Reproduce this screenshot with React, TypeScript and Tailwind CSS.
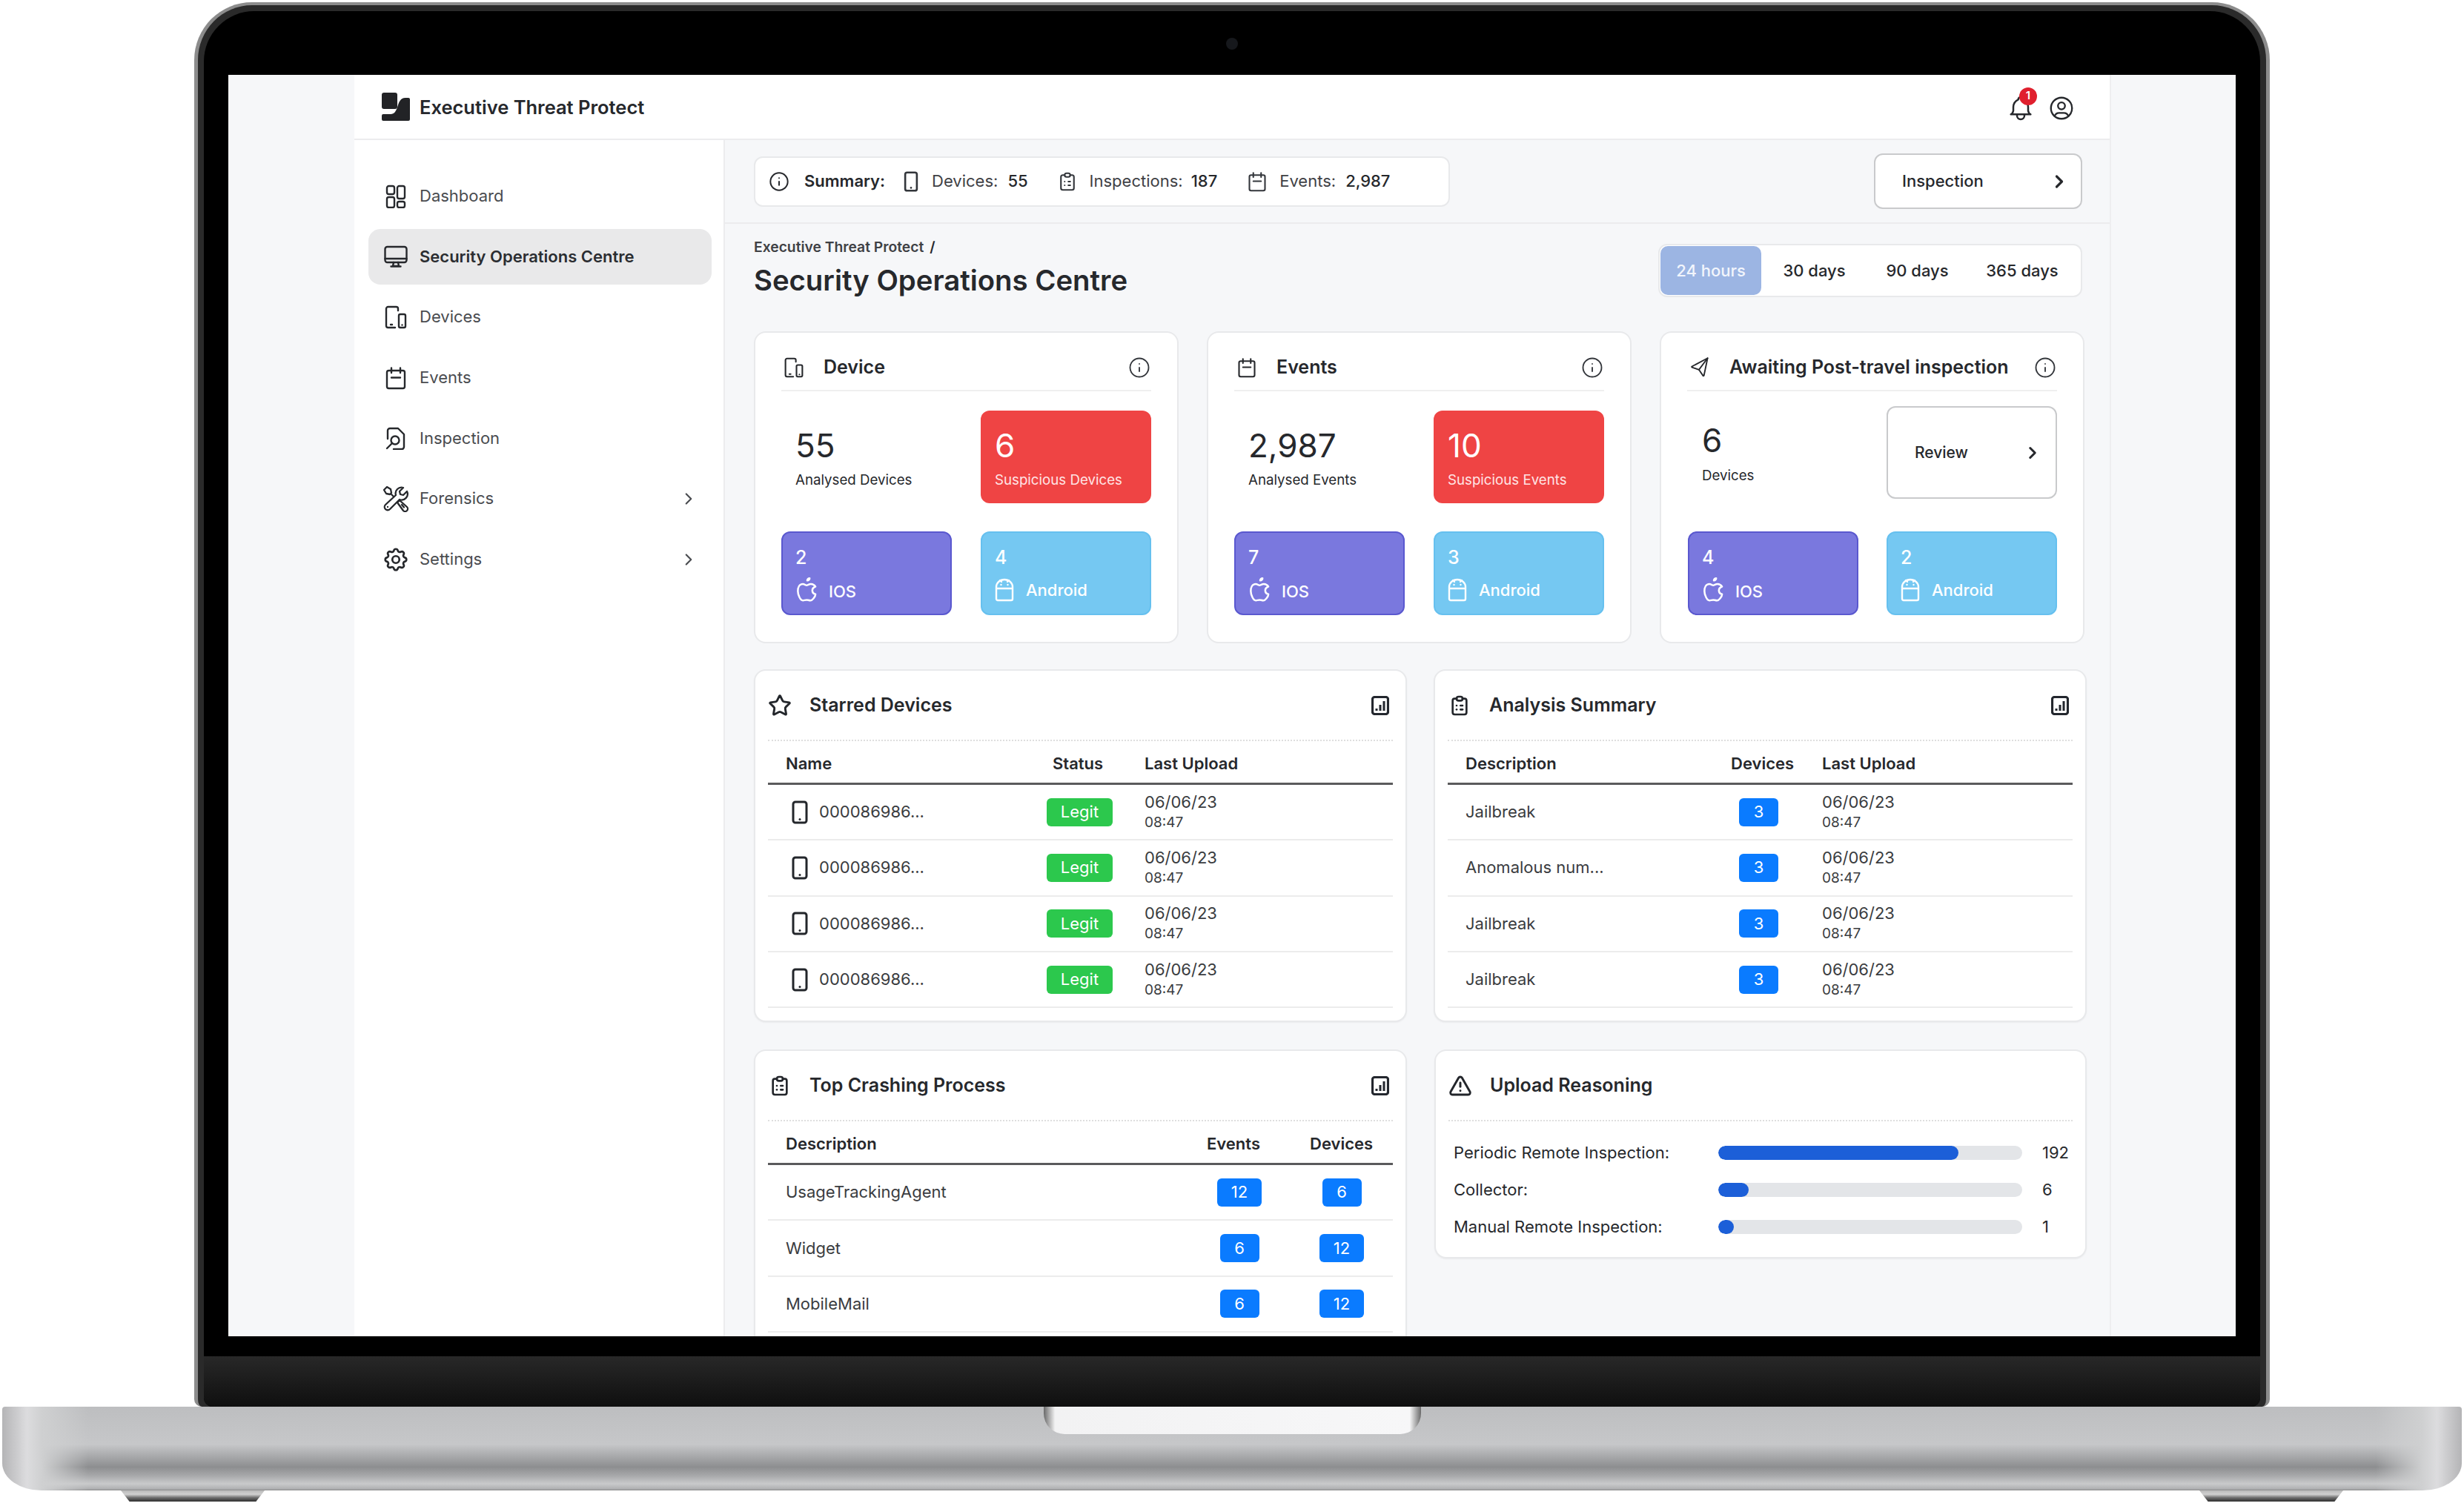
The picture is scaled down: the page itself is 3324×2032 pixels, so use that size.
import type { ReactNode } from 'react';
import { ChevronRight, Info, Star, TriangleAlert } from 'lucide-react';
import {
  TbBell,
  TbBrandApple,
  TbClipboardList,
  TbSend,
  TbSettings,
  TbUserCircle,
} from 'react-icons/tb';

/**
 * Inline icons
 */
const LogoMark = () => (
  <svg viewBox="0 0 38 38" className="h-[38px] w-[38px] fill-[#222326]">
    <rect width="21" height="22" rx="3" />
    <path d="M2 29H12C17 29 19 25 21 20C23 13 25 7 32 7H36a2 2 0 0 1 2 2V36a2 2 0 0 1-2 2H2a2 2 0 0 1-2-2V31a2 2 0 0 1 2-2Z" />
  </svg>
);

const GridIcon = ({ className = '' }: { className?: string }) => (
  <svg viewBox="0 0 32 32" fill="none" stroke="currentColor" strokeWidth="2.4" className={className}>
    <rect x="4" y="2" width="10" height="11" rx="2.5" />
    <rect x="18" y="2" width="10" height="17" rx="2.5" />
    <rect x="4" y="17" width="10" height="14" rx="2.5" />
    <rect x="18" y="23" width="10" height="8" rx="2.5" />
  </svg>
);

const MonitorIcon = ({ className = '' }: { className?: string }) => (
  <svg viewBox="0 0 32 32" fill="none" stroke="currentColor" strokeWidth="2.4" strokeLinecap="round" strokeLinejoin="round" className={className}>
    <rect x="1.5" y="3" width="29" height="21" rx="3" />
    <path d="M1.5 19H30.5M13 24 12 29H20L19 24M9.5 29.5H22.5" />
  </svg>
);

const DevicesIcon = ({ className = '' }: { className?: string }) => (
  <svg viewBox="0 0 32 32" fill="none" stroke="currentColor" strokeWidth="2.4" strokeLinecap="round" strokeLinejoin="round" className={className}>
    <path d="M19 7V4.5A2.5 2.5 0 0 0 16.5 2H5.5A2.5 2.5 0 0 0 3 4.5V27.500A2.500 2.500 0 0 0 5.500 30H15" />
    <rect x="20" y="12" width="9" height="18" rx="2" />
    <path d="M9 26H11M24.500 26.500V26.600" />
  </svg>
);

const CalendarIcon = ({ className = '' }: { className?: string }) => (
  <svg viewBox="0 0 32 32" fill="none" stroke="currentColor" strokeWidth="2.4" strokeLinecap="round" strokeLinejoin="round" className={className}>
    <rect x="4" y="6" width="24" height="24" rx="2.5" />
    <path d="M10 2.500V9M22 2.500V9M10 15.500H22" />
  </svg>
);

const InspectIcon = ({ className = '' }: { className?: string }) => (
  <svg viewBox="0 0 32 32" fill="none" stroke="currentColor" strokeWidth="2.4" strokeLinecap="round" strokeLinejoin="round" className={className}>
    <path d="M5 17V6a3 3 0 0 1 3-3h11l8 8v17a3 3 0 0 1-3 3H13" />
    <circle cx="15" cy="19" r="5.500" />
    <path d="M11 23 4 30" />
  </svg>
);

const ToolsIcon = ({ className = '' }: { className?: string }) => (
  <svg viewBox="0 0 36 36" fill="none" stroke="currentColor" strokeWidth="2.300" strokeLinecap="round" strokeLinejoin="round" className={className}>
    <path d="M2 6 6 2 11 5 12 10 10 12 5 11ZM11 11 14.500 14.500" />
    <path d="M20 23 23 20 33 29A3.500 3.500 0 0 1 28 34ZM26 26 29 29.500" />
    <path d="M33 8 28 13 24 12 23 8 28 3A8 8 0 0 0 18 13L4 26A4.200 4.200 0 0 0 10 32L23 19A8 8 0 0 0 33 8Z" />
    <path d="M7 29V29.100" />
  </svg>
);

const PhoneIcon = ({ className = '' }: { className?: string }) => (
  <svg viewBox="0 0 22 32" fill="none" stroke="currentColor" strokeWidth="3" strokeLinecap="round" className={className}>
    <rect x="2" y="2" width="18" height="28" rx="3" />
    <path d="M11 25.500V25.600" />
  </svg>
);

const ChartIcon = () => (
  <svg viewBox="0 0 24 26" fill="none" stroke="#23272e" className="h-[26px] w-[24px]">
    <rect x="1.500" y="1.500" width="21" height="23" rx="3" strokeWidth="3.200" />
    <path d="M7 20V17M12 20V12M17 20V7" strokeWidth="3" />
  </svg>
);

const AndroidIcon = () => (
  <svg viewBox="0 0 26 32" fill="none" stroke="currentColor" strokeWidth="2.400" strokeLinecap="round" strokeLinejoin="round" className="h-[32px] w-[26px]">
    <path d="M2 14V12A11 10 0 0 1 24 12V14M2 14H24V28A2 2 0 0 1 22 30H4A2 2 0 0 1 2 28Z" />
    <path d="M8.500 9V9.100M17.500 9V9.100M7 3 9 5M19 3 17 5" />
  </svg>
);

/**
 * Sidebar
 */
const navItems: { label: string; icon: ReactNode; arrow?: boolean; active?: boolean }[] = [
  { label: 'Dashboard', icon: <GridIcon className="size-8" /> },
  { label: 'Security Operations Centre', icon: <MonitorIcon className="size-8" />, active: true },
  { label: 'Devices', icon: <DevicesIcon className="size-8" /> },
  { label: 'Events', icon: <CalendarIcon className="size-8" /> },
  { label: 'Inspection', icon: <InspectIcon className="size-8" /> },
  { label: 'Forensics', icon: <ToolsIcon className="size-[36px] shrink-0" />, arrow: true },
  { label: 'Settings', icon: <TbSettings className="size-[38px] shrink-0" strokeWidth={1.7} />, arrow: true },
];

const Sidebar = () => (
  <aside className="flex w-[500px] shrink-0 flex-col gap-[6.7px] border-r-2 border-[#ececee] bg-white pt-[38px] pr-4 pl-[19px]">
    {navItems.map((item) => (
      <div
        key={item.label}
        className={`flex h-[75px] items-center rounded-[16px] pr-[18px] pl-[21px] ${item.active ? 'bg-[#e9e9ea] font-semibold text-[#2b2d31]' : 'text-[#4a4c50]'}`}
      >
        <span className="flex w-[32px] items-center justify-center text-[#26282c]">{item.icon}</span>
        <span className="ml-4 flex-1 text-[22px]">{item.label}</span>
        {item.arrow && <ChevronRight className="size-[26px]" strokeWidth={2} />}
      </div>
    ))}
  </aside>
);

/**
 * Top stat cards
 */
const MiniBox = ({ value, kind }: { value: string; kind: 'ios' | 'android' }) => (
  <div
    className={`h-[113px] rounded-[12px] border-2 pt-[18px] pl-[17px] text-white ${kind === 'ios' ? 'border-[#5a58cf] bg-[#7a78de]' : 'border-[#66c0ef] bg-[#75c8f2]'}`}
  >
    <div className="text-[25px] leading-[30px] font-medium">{value}</div>
    {kind === 'ios' ? (
      <div className="mt-[13px] flex h-[32px] items-center gap-[10px]">
        <TbBrandApple className="-ml-[3px] size-[38px]" strokeWidth={1.6} />
        <span className="mt-1 text-[22px] font-medium">IOS</span>
      </div>
    ) : (
      <div className="mt-[13px] flex h-[32px] items-center gap-[16px]">
        <AndroidIcon />
        <span className="text-[22px] font-medium">Android</span>
      </div>
    )}
  </div>
);

const StatCard = ({
  icon,
  title,
  children,
}: {
  icon: ReactNode;
  title: string;
  children: ReactNode;
}) => (
  <div className="flex h-[421px] flex-col rounded-[16px] border-2 border-[#e8e9eb] bg-white px-[35px]">
    <div className="mt-[16px] flex h-[63px] shrink-0 items-center border-b-2 border-[#efefef]">
      <span className="flex w-[57px] pl-[3px] text-[#26282c]">{icon}</span>
      <span className="flex-1 text-[25px] font-semibold text-[#26282c]">{title}</span>
      <Info className="mr-[1px] size-[30px] text-[#33363b]" strokeWidth={1.5} />
    </div>
    {children}
  </div>
);

const StatBody = ({
  count,
  label,
  suspicious,
  suspiciousLabel,
  ios,
  android,
}: {
  count: string;
  label: string;
  suspicious: string;
  suspiciousLabel: string;
  ios: string;
  android: string;
}) => (
  <div className="mt-[26px] grid grid-cols-[230px_230px] gap-x-[39px] gap-y-[38px]">
    <div className="h-[125px] pt-[21px] pl-[19px] text-[#26282c]">
      <div className="text-[44px] leading-[52px]">{count}</div>
      <div className="mt-[9px] text-[18.700px] leading-[24px]">{label}</div>
    </div>
    <div className="h-[125px] rounded-[12px] bg-[#ef4444] pt-[21px] pl-[19px] text-white">
      <div className="text-[44px] leading-[52px]">{suspicious}</div>
      <div className="mt-[9px] text-[18.700px] leading-[24px] text-[#ffe4e4]">{suspiciousLabel}</div>
    </div>
    <MiniBox value={ios} kind="ios" />
    <MiniBox value={android} kind="android" />
  </div>
);

/**
 * Table cards
 */
const TableCard = ({
  icon,
  title,
  chart = true,
  head,
  children,
}: {
  icon: ReactNode;
  title: string;
  chart?: boolean;
  head?: ReactNode;
  children: ReactNode;
}) => (
  <div className="rounded-[16px] border-2 border-[#e8e9eb] bg-white px-[17px] shadow-[0_1px_2px_rgba(0,0,0,0.05)]">
    <div className="flex h-[95px] items-center border-b-2 border-dotted border-[#dedede]">
      <span className="flex w-[56px] text-[#23262b]">{icon}</span>
      <span className="flex-1 text-[25px] font-semibold text-[#26282c]">{title}</span>
      {chart && (
        <span className="mr-[5px]">
          <ChartIcon />
        </span>
      )}
    </div>
    {head && (
      <div className="flex h-[59px] items-center border-b-[3px] border-[#5a5a5c] pt-[4px] text-[22px] font-semibold text-[#26282c]">
        {head}
      </div>
    )}
    {children}
  </div>
);

const Row = ({ children }: { children: ReactNode }) => (
  <div className="flex h-[75.300px] items-center border-b-2 border-[#ececec] text-[22px] text-[#3a3c40]">{children}</div>
);

const Upload = () => (
  <div className="flex flex-col text-[#3a3c40]">
    <span className="text-[22px] leading-[28px]">06/06/23</span>
    <span className="text-[19px] leading-[28px]">08:47</span>
  </div>
);

const CountBadge = ({ value, wide }: { value: string; wide?: boolean }) => (
  <span className={`flex h-[38px] items-center justify-center rounded-[6px] bg-[#0a7bff] text-[22px] text-white ${wide ? 'w-[60px]' : 'w-[53px]'}`}>
    {value}
  </span>
);

const analysisRows = ['Jailbreak', 'Anomalous num...', 'Jailbreak', 'Jailbreak'];
const crashRows = [
  { name: 'UsageTrackingAgent', events: '12', devices: '6' },
  { name: 'Widget', events: '6', devices: '12' },
  { name: 'MobileMail', events: '6', devices: '12' },
];
const uploadRows = [
  { label: 'Periodic Remote Inspection:', value: '192', width: '79%' },
  { label: 'Collector:', value: '6', width: '10%' },
  { label: 'Manual Remote Inspection:', value: '1', width: '5%' },
];

/**
 * App screen
 */
const Screen = () => (
  <div className="h-[1702px] overflow-hidden bg-[#f6f7f9] pr-[168px] pl-[170px] font-['Inter',sans-serif]">
    <div className="flex h-full flex-col border-r-2 border-[#eeeef0]">
      <header className="flex h-[88px] shrink-0 items-center border-b-2 border-[#ececee] bg-white pr-[46px] pl-[37px]">
        <LogoMark />
        <span className="mt-[3px] ml-[13px] flex-1 text-[25.500px] font-semibold text-[#26282c]">Executive Threat Protect</span>
        <span className="relative mt-[3px] flex">
          <TbBell className="size-[40px] text-[#26282c]" strokeWidth={1.5} />
          <span className="absolute -top-[8px] left-[18px] flex size-[24px] items-center justify-center rounded-full bg-[#e0202e] text-[15px] font-semibold text-white">
            1
          </span>
        </span>
        <TbUserCircle className="mt-[3px] ml-[16px] size-[38px] text-[#26282c]" strokeWidth={1.5} />
      </header>

      <div className="flex min-h-0 flex-1">
        <Sidebar />
        <main className="min-w-0 flex-1 overflow-hidden">
          <div className="flex h-[113px] items-center justify-between border-b-2 border-[#ececee] pr-[37px] pl-[39px]">
            <div className="flex h-[68px] w-[939px] items-center rounded-[12px] border-2 border-[#e8e9eb] bg-white pl-[18px] text-[22px] text-[#3f4145]">
              <Info className="size-[28px] text-[#26282c]" strokeWidth={1.7} />
              <span className="ml-[20px] font-semibold text-[#26282c]">Summary:</span>
              <PhoneIcon className="ml-[25px] h-[28px] w-[20px] text-[#33363b]" />
              <span className="ml-[18px]">Devices:</span>
              <span className="ml-[13px] font-medium text-[#26282c]">55</span>
              <TbClipboardList className="ml-[38px] size-[30px] text-[#33363b]" strokeWidth={1.7} />
              <span className="ml-[15px]">Inspections:</span>
              <span className="ml-[11px] font-medium text-[#26282c]">187</span>
              <CalendarIcon className="ml-[40px] size-[28px] text-[#33363b]" />
              <span className="ml-[16px]">Events:</span>
              <span className="ml-[13px] font-medium text-[#26282c]">2,987</span>
            </div>
            <div className="flex h-[75px] w-[281px] items-center justify-between rounded-[12px] border-2 border-[#c9cacc] bg-white pr-[15px] pl-[36px] text-[22px] font-medium text-[#26282c]">
              Inspection
              <ChevronRight className="size-[28px]" strokeWidth={2.800} />
            </div>
          </div>

          <div className="pr-[33px] pl-[39px]">
            <div className="flex items-start justify-between pt-[17px] pr-[4px]">
              <div>
                <div className="text-[19.300px] leading-[28px] font-semibold text-[#3f4145]">
                  Executive Threat Protect<span className="ml-[8px] text-[#26282c]">/</span>
                </div>
                <h1 className="mt-[7px] text-[38.300px] leading-[48px] font-semibold text-[#26282c]">Security Operations Centre</h1>
              </div>
              <div className="mt-[10px] flex h-[72px] w-[572px] items-center rounded-[12px] border-2 border-[#e8e9eb] bg-white p-[1px] text-[22px] font-medium text-[#26282c]">
                <span className="flex h-[66px] w-[136px] items-center justify-center rounded-[10px] bg-[#9cb5e3] text-[#f2f5fc]">24 hours</span>
                <span className="w-[143px] text-center">30 days</span>
                <span className="w-[135px] text-center">90 days</span>
                <span className="w-[148px] text-center">365 days</span>
              </div>
            </div>

            <div className="mt-[45px] grid grid-cols-[573px_573px_573px] gap-x-[38px]">
              <StatCard icon={<DevicesIcon className="size-[28px]" />} title="Device">
                <StatBody count="55" label="Analysed Devices" suspicious="6" suspiciousLabel="Suspicious Devices" ios="2" android="4" />
              </StatCard>
              <StatCard icon={<CalendarIcon className="size-[28px]" />} title="Events">
                <StatBody count="2,987" label="Analysed Events" suspicious="10" suspiciousLabel="Suspicious Events" ios="7" android="3" />
              </StatCard>
              <StatCard icon={<TbSend className="size-[30px] -rotate-[8deg]" strokeWidth={1.5} />} title="Awaiting Post-travel inspection">
                <div className="mt-[20px] ml-[1px] grid grid-cols-[230px_230px] gap-x-[38px] gap-y-[44px]">
                  <div className="h-[125px] pt-[20px] pl-[19px] text-[#26282c]">
                    <div className="text-[44px] leading-[52px]">6</div>
                    <div className="mt-[10px] text-[18.700px] leading-[24px]">Devices</div>
                  </div>
                  <div className="flex h-[125px] items-center justify-between rounded-[12px] border-2 border-[#c9cacc] pr-[18px] pl-[36px] text-[21px] font-medium text-[#26282c]">
                    Review
                    <ChevronRight className="size-[26px]" strokeWidth={2.800} />
                  </div>
                  <MiniBox value="4" kind="ios" />
                  <MiniBox value="2" kind="android" />
                </div>
              </StatCard>
            </div>

            <div className="mt-[35px] grid grid-cols-[881px_881px] gap-x-[36px] gap-y-[37px]">
              <TableCard
                icon={<Star className="size-[32px]" strokeWidth={2.200} />}
                title="Starred Devices"
                head={
                  <>
                    <span className="w-[384px] pl-[24px]">Name</span>
                    <span className="w-[124px]">Status</span>
                    <span>Last Upload</span>
                  </>
                }
              >
                <div className="pb-[17px]">
                  {[0, 1, 2, 3].map((i) => (
                    <Row key={i}>
                      <span className="flex w-[376px] items-center gap-[15px] pl-[32px]">
                        <PhoneIcon className="h-[32px] w-[22px] text-[#23262b]" />
                        000086986...
                      </span>
                      <span className="w-[132px]">
                        <span className="flex h-[38px] w-[89px] items-center justify-center rounded-[6px] bg-[#2cc84d] text-white">Legit</span>
                      </span>
                      <Upload />
                    </Row>
                  ))}
                </div>
              </TableCard>

              <TableCard
                icon={<TbClipboardList className="size-[32px]" strokeWidth={2} />}
                title="Analysis Summary"
                head={
                  <>
                    <span className="w-[382px] pl-[24px]">Description</span>
                    <span className="w-[123px]">Devices</span>
                    <span>Last Upload</span>
                  </>
                }
              >
                <div className="pb-[17px]">
                  {analysisRows.map((name, i) => (
                    <Row key={i}>
                      <span className="w-[393px] pl-[24px]">{name}</span>
                      <span className="w-[112px]">
                        <CountBadge value="3" />
                      </span>
                      <Upload />
                    </Row>
                  ))}
                </div>
              </TableCard>

              <TableCard
                icon={<TbClipboardList className="size-[32px]" strokeWidth={2} />}
                title="Top Crashing Process"
                head={
                  <>
                    <span className="w-[592px] pl-[24px]">Description</span>
                    <span className="w-[139px]">Events</span>
                    <span>Devices</span>
                  </>
                }
              >
                {crashRows.map((row) => (
                  <Row key={row.name}>
                    <span className="w-[596px] pl-[24px]">{row.name}</span>
                    <span className="flex w-[80px] justify-center">
                      <CountBadge value={row.events} wide={row.events === '12'} />
                    </span>
                    <span className="ml-[58px] flex w-[80px] justify-center">
                      <CountBadge value={row.devices} wide={row.devices === '12'} />
                    </span>
                  </Row>
                ))}
                <div className="h-[90px]" />
              </TableCard>

              <div className="ml-[1px] self-start">
                <TableCard icon={<TriangleAlert className="size-[32px]" strokeWidth={2.200} />} title="Upload Reasoning" chart={false}>
                  <div className="flex flex-col gap-[31px] pt-[33px] pb-[31px]">
                    {uploadRows.map((row) => (
                      <div key={row.label} className="flex h-[19px] items-center text-[22px] text-[#26282c]">
                        <span className="w-[364px] pl-[7px]">{row.label}</span>
                        <div className="h-[19px] w-[410px] overflow-hidden rounded-full bg-[#e3e5e8]">
                          <div className="h-full rounded-full bg-[#1c5fd8]" style={{ width: row.width }} />
                        </div>
                        <span className="ml-[27px]">{row.value}</span>
                      </div>
                    ))}
                  </div>
                </TableCard>
              </div>
            </div>
          </div>
        </main>
      </div>
    </div>
  </div>
);

const Foot = () => (
  <div className="h-[15px] w-[194px] bg-[linear-gradient(180deg,#b9b9b9_0%,#d0d0d0_35%,#6e6e6e_65%,#2e2e2e_100%)] [clip-path:polygon(0_0,100%_0,94%_100%,6%_100%)]" />
);

const App = () => {
  return (
    <div className="flex h-[2032px] w-[3324px] flex-col overflow-hidden bg-white pt-[3px]">
      {/* Lid */}
      <div className="ml-[262px] h-[1895px] w-[2800px] shrink-0 rounded-t-[78px] rounded-b-[10px] border-x-[5px] border-t-[4px] border-[#8c8c8c] bg-[#2a2a2a] pt-[8px]">
        <div className="mx-[8px] flex h-[1883px] flex-col overflow-hidden rounded-t-[68px] rounded-b-[12px] bg-black">
          <div className="flex h-[86px] shrink-0 justify-center pt-[36px]">
            <span className="size-[16px] rounded-full bg-[#16181c]" />
          </div>
          <div className="px-[33px]">
            <Screen />
          </div>
          <div className="mt-[27px] flex-1 bg-[linear-gradient(180deg,#282828,#0f0f0f)]" />
        </div>
      </div>

      {/* Base */}
      <div className="mx-[3px] flex h-[113px] shrink-0 justify-center rounded-t-[4px] rounded-b-[53px_37px] bg-[linear-gradient(90deg,#b4b4b6_0%,#dcdcde_1%,#cfd0d1_1.600%,rgba(190,190,192,0)_3.500%,rgba(190,190,192,0)_96.500%,#cfd0d1_98.400%,#dcdcde_99%,#b4b4b6_100%),linear-gradient(180deg,#bdbec0_0%,#c6c7c9_45%,#8d8e90_72%,#a6a7a9_82%,#c9cacb_92%,#b0b1b3_98%,#8c8c8c_100%)]">
        <div className="h-[37px] w-[509px] rounded-b-[28px] bg-[linear-gradient(90deg,#6a6a6a_0%,#f2f2f3_3%,#f7f7f8_97%,#6a6a6a_100%)]" />
      </div>

      {/* Feet */}
      <div className="flex justify-between px-[163px]">
        <Foot />
        <Foot />
      </div>
    </div>
  );
};

export default App;
